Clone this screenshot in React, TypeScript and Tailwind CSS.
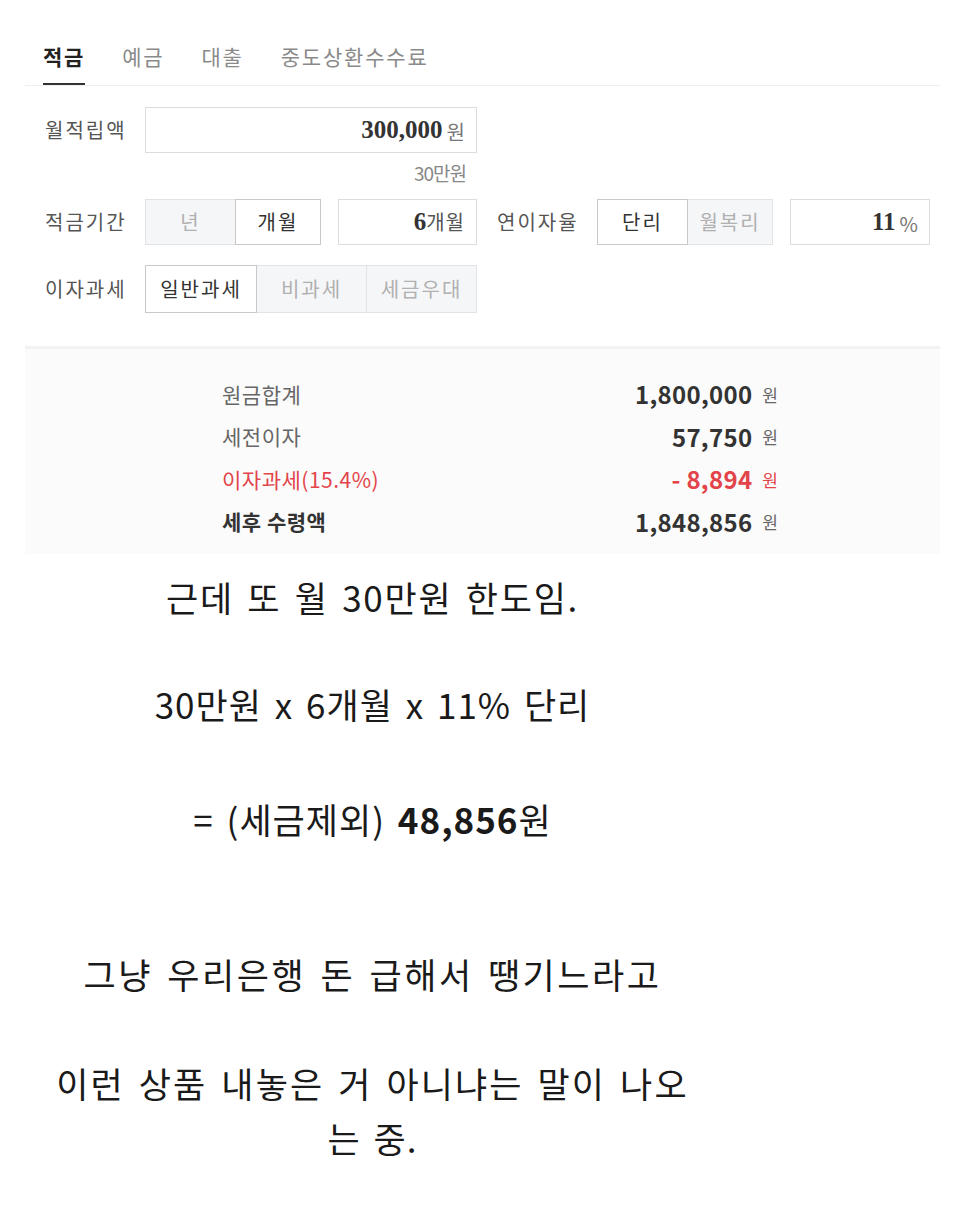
import React from "react";

const kr = { fontFamily: '"Noto Sans CJK KR", "Noto Sans", sans-serif' };
const serif = { fontFamily: '"Liberation Serif", "Noto Sans CJK KR", serif' };

function Seg({ items, active, widths }: { items: string[]; active: number; widths: string[] }) {
  return (
    <div className="flex h-full">
      {items.map((t, i) => (
        <div
          key={t}
          className={`${widths[i]} flex items-center justify-center border text-[20px] tracking-[2px] ${
            i === active
              ? "bg-white border-[#c9c9c9] text-[#333] z-10"
              : "bg-[#f5f6f8] border-[#e2e3e6] text-[#b0b0b0]"
          } ${i > 0 ? "-ml-px" : ""}`}
        >
          {t}
        </div>
      ))}
    </div>
  );
}

function NumBox({ num, unit, w }: { num: string; unit: string; w: string }) {
  return (
    <div className={`${w} h-full border border-[#dcdcdc] bg-white flex items-center justify-end pr-[11px]`}>
      <span className="text-[25px] font-bold text-[#333]" style={serif}>
        {num}
      </span>
      <span className="ml-[4px] text-[20px] text-[#777] mt-[3px]">{unit}</span>
    </div>
  );
}

function ResultRow({ label, value, red, strong }: { label: string; value: string; red?: boolean; strong?: boolean }) {
  const labelColor = red ? "text-[#e2444a]" : strong ? "text-[#333] font-bold" : "text-[#666]";
  const valueColor = red ? "text-[#e2444a]" : "text-[#333]";
  return (
    <div className="h-[42.5px] flex items-center justify-between">
      <span className={`text-[21px] tracking-[0.5px] ${labelColor}`}>{label}</span>
      <span className="flex items-center">
        <span className={`text-[24px] tracking-[0.3px] font-bold ${valueColor}`}>{value}</span>
        <span className={`ml-[10px] text-[17px] ${red ? "text-[#e2444a]" : "text-[#666]"}`}>원</span>
      </span>
    </div>
  );
}

export default function App() {
  return (
    <div className="w-[953px] min-h-[1207px] bg-white" style={kr}>
      <div className="ml-[25px] w-[915px]">
        {/* Tabs */}
        <div className="flex pl-[18px] pt-[42px] border-b border-[#efefef] text-[21px] leading-[28px] tracking-[1.8px]">
          <div className="h-[43px] border-b-2 border-[#333] -mb-px font-bold text-[#222]">적금</div>
          <div className="ml-[37px] h-[43px] text-[#8a8a8a]">예금</div>
          <div className="ml-[37px] h-[43px] text-[#8a8a8a]">대출</div>
          <div className="ml-[37px] h-[43px] text-[#8a8a8a]">중도상환수수료</div>
        </div>

        {/* Form */}
        <div className="pl-[20px] pt-[21px]">
          <div className="flex h-[46px] items-center">
            <span className="w-[100px] text-[20px] tracking-[2px] text-[#555]">월적립액</span>
            <NumBox num="300,000" unit="원" w="w-[332px]" />
          </div>
          <div className="w-[432px] text-right pr-[11px] h-[46px] pt-[6px] text-[19px] text-[#888] tracking-[-1px]">30만원</div>
          <div className="flex h-[46px] items-center">
            <span className="w-[100px] text-[20px] tracking-[2px] text-[#555]">적금기간</span>
            <Seg items={["년", "개월"]} active={1} widths={["w-[91px]", "w-[86px]"]} />
            <div className="ml-[17px] h-full">
              <div className="w-[139px] h-full border border-[#dcdcdc] bg-white flex items-center justify-end pr-[11px]">
                <span className="text-[25px] font-bold text-[#333]" style={serif}>6</span>
                <span className="text-[20px] text-[#555] tracking-[1px]">개월</span>
              </div>
            </div>
            <span className="ml-[20px] w-[100px] text-[20px] tracking-[2px] text-[#555]">연이자율</span>
            <Seg items={["단리", "월복리"]} active={0} widths={["w-[91px]", "w-[86px]"]} />
            <div className="ml-[17px] h-full">
              <NumBox num="11" unit="%" w="w-[140px]" />
            </div>
          </div>
          <div className="flex h-[48px] items-center mt-[20px]">
            <span className="w-[100px] text-[20px] tracking-[2px] text-[#555]">이자과세</span>
            <Seg items={["일반과세", "비과세", "세금우대"]} active={0} widths={["w-[112px]", "w-[111px]", "w-[111px]"]} />
          </div>
        </div>

        {/* Result panel */}
        <div className="mt-[33px] border-t-[3px] border-[#f2f2f2] bg-[#fbfbfb] pt-[24px] pb-[11px]">
          <div className="ml-[197px] w-[556px]">
            <ResultRow label="원금합계" value="1,800,000" />
            <ResultRow label="세전이자" value="57,750" />
            <ResultRow label="이자과세(15.4%)" value="- 8,894" red />
            <ResultRow label="세후 수령액" value="1,848,856" strong />
          </div>
        </div>
      </div>

      {/* Commentary */}
      <div className="ml-[40px] w-[665px] text-center text-[35px] [word-spacing:4px] text-[#1a1a1a]">
        <p className="mt-[21px] leading-[44px] tracking-[1.7px]">근데 또 월 30만원 한도임.</p>
        <p className="mt-[63px] leading-[44px] tracking-[1px]">30만원 x 6개월 x 11% 단리</p>
        <p className="mt-[71px] leading-[44px] tracking-[1px]">
          = (세금제외) <span className="font-bold">48,856</span>원
        </p>
        <p className="mt-[111px] leading-[44px] tracking-[2.5px]">그냥 우리은행 돈 급해서 땡기느라고</p>
        <p className="mt-[59px] leading-[55px] tracking-[2.1px]">
          이런 상품 내놓은 거 아니냐는 말이 나오
          <br />
          <span className="tracking-[1px]">는 중.</span>
        </p>
      </div>
    </div>
  );
}
